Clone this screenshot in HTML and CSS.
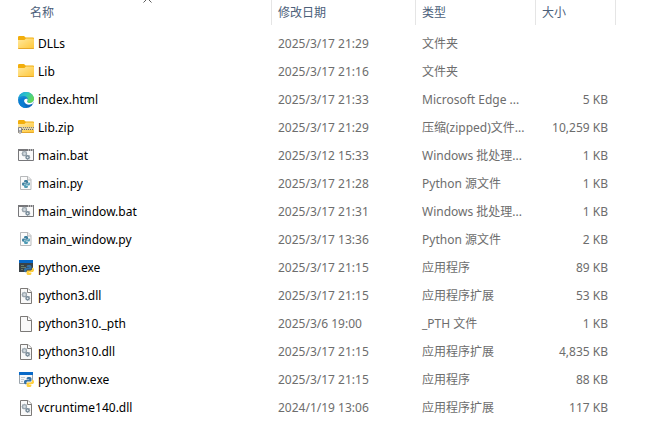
FILE: index.html
```html
<!DOCTYPE html>
<html lang="zh-CN">
<head>
<meta charset="utf-8">
<meta name="viewport" content="width=device-width, initial-scale=1">
<title>文件列表</title>
<link rel="stylesheet" href="styles.css">
</head>
<body>
<svg class="sprite" aria-hidden="true">
  <defs>
    <linearGradient id="fold" x1="0" y1="0" x2="1" y2="1"><stop offset="0" stop-color="#ffe9a0"/><stop offset="1" stop-color="#ffc636"/></linearGradient>
    <linearGradient id="edge-top" x1="0" y1="0" x2="1" y2="0.4"><stop offset="0" stop-color="#1b9fdc"/><stop offset="0.5" stop-color="#2cc3c9"/><stop offset="1" stop-color="#62d957"/></linearGradient>
    <linearGradient id="edge-left" x1="0" y1="0" x2="0.4" y2="1"><stop offset="0" stop-color="#1c9de0"/><stop offset="1" stop-color="#0b65bd"/></linearGradient>
    <symbol id="folder" viewBox="0 0 16 16">
      <path d="M0 1.2Q0 0 1.2 0H6L7.6 1.5H15Q16 1.5 16 2.5V5H0z" fill="#f2ae0c"/>
      <path d="M0 4H6.4L8 2.4H15Q16 2.4 16 3.4V12Q16 13 15 13H1Q0 13 0 12z" fill="url(#fold)"/>
      <path d="M0 12H16Q16 13 15 13H1Q0 13 0 12z" fill="#e6a72a"/>
    </symbol>
    <symbol id="zip" viewBox="0 0 16 16">
      <use href="#folder"/>
      <path d="M0 7H16V10H0z" fill="#d9cda6"/>
      <path d="M5 7.5H16" stroke="#8b8471" stroke-dasharray="1 1"/>
      <path d="M4 9.5H16" stroke="#6d6960" stroke-dasharray="1 1"/>
      <path d="M.5 7.5H3.5V12.5Q2 14 .5 12.5z" fill="#eeeeee" stroke="#88888a"/>
      <path d="M1.5 10H2.5V12H1.5z" fill="#66666a"/>
    </symbol>
    <symbol id="edge" viewBox="0 0 16 16">
      <circle cx="8" cy="8" r="8" fill="url(#edge-left)"/>
      <path d="M.2 6.6C1 2.6 4.2 0 8 0c4.6 0 8 3.3 8 6.9 0 2.5-1.8 4.1-4.1 4.1-1.8 0-2.9-.7-2.9-1.5 0-.5.7-.9.7-2.1C9.7 5.6 8.1 4.1 5.6 4.1 3.1 4.1 1.2 5.1.2 6.6z" fill="url(#edge-top)"/>
      <path d="M5.6 7.8C4.6 10.5 6.3 14.1 9.5 15.8 6.2 16.5 2.3 14.7 1 11.5-.1 8.6 2.6 5.8 6 5.9c1.1 0 1.8.3 2.3.7C7 6.5 6 7 5.6 7.8z" fill="#097dd2"/>
      <path d="M8.8 6.8C6.5 6.7 5.7 8.4 6.3 9.8c.9 2.2 3.5 3.2 5.8 2.8 1.3-.2 2.2-.7 2.8-1.1l1.1-2.2V8c-.9 2-2.4 3-4.1 3-1.8 0-2.9-.7-2.9-1.5 0-.5.7-.9.7-2.1z" fill="#fff"/>
    </symbol>
    <symbol id="gears" viewBox="0 0 16 16">
      <circle cx="6.5" cy="5.7" r="2" fill="#d3dbe0" stroke="#9aa5ad" stroke-width="1.3"/>
      <path d="M6.5 2.8V3.6M3.6 5.7H4.4M4.4 3.7L5 4.2M8.6 3.7L8 4.2M4.4 7.8L5 7.2" stroke="#a5afb6"/>
      <circle cx="9.6" cy="9.3" r="1.6" fill="#e3e9ed" stroke="#748795" stroke-width="1.4"/>
      <path d="M9.6 11.2V12M11.5 9.3H12.2M11 10.8L11.5 11.3M11 7.8L11.5 7.3" stroke="#8796a1"/>
    </symbol>
    <symbol id="bat" viewBox="0 0 16 16">
      <path d="M.5 1.5H15.5V12.5H.5z" fill="#fafafa" stroke="#77777a"/>
      <path d="M0 1H16V3H0z" fill="#77777a"/>
      <path d="M10 2H11M12 2H13M14 2H15" stroke="#fff"/>
      <use href="#gears"/>
    </symbol>
    <symbol id="page" viewBox="0 0 16 16">
      <path d="M2.5 .5H10L13.5 4V15.5H2.5z" fill="#f9f9f9" stroke="#7c7a78"/>
      <path d="M9.5 .5V4.5H13.5" fill="#fff" stroke="#7c7a78"/>
    </symbol>
    <symbol id="dll" viewBox="0 0 16 16">
      <use href="#page"/>
      <use href="#gears" y="1"/>
    </symbol>
    <symbol id="snake" viewBox="0 0 10 10">
      <path d="M5 0C3.2 0 2.6.7 2.6 1.6V2.6H5.2V3.1H1.5C.5 3.1 0 3.9 0 5s.5 2.2 1.4 2.2H2.4V6C2.4 5.1 3 4.6 3.8 4.6H6.3C7 4.6 7.5 4.1 7.5 3.4V1.6C7.5.6 6.7 0 5 0z" fill="var(--snake-a)"/>
      <path d="M5 10C6.8 10 7.4 9.3 7.4 8.4V7.4H4.8V6.9H8.5C9.5 6.9 10 6.1 10 5S9.5 2.8 8.6 2.8H8V4C8 4.9 7.2 5.4 6.4 5.4H3.9C3.1 5.4 2.6 5.9 2.6 6.6V8.4C2.6 9.4 3.3 10 5 10z" fill="var(--snake-b)"/>
    </symbol>
    <symbol id="py" viewBox="0 0 16 16">
      <path d="M2.5 .5H10L13 3.5V13.5H2.5z" fill="#fbfbfb" stroke="#b7b9bb"/>
      <path d="M9.5 .5V4H13" fill="#eee" stroke="#b7b9bb"/>
      <use href="#snake" class="snake-file" x="4" y="4" width="8" height="8"/>
    </symbol>
    <symbol id="exe" viewBox="0 0 16 16">
      <path d="M1 0H15V12H1z" fill="#3b4246"/>
      <path d="M1 0H15V3H1z" fill="#0869c8"/>
      <path d="M3 5.5H6M3 7.5H8M3 9.5H5" stroke="#66806b"/>
      <use href="#snake" class="snake-app" x="6" y="5" width="10" height="10"/>
    </symbol>
    <symbol id="exew" viewBox="0 0 16 16">
      <path d="M1.5 .5H14.5V11.5H1.5z" fill="#f5f7f9" stroke="#9ba5ad"/>
      <path d="M1 0H15V3H1z" fill="#0869c8"/>
      <path d="M3 5.5H7M3 7.5H6M3 9.5H5" stroke="#c3cbd1"/>
      <use href="#snake" class="snake-app" x="6" y="5" width="10" height="10"/>
    </symbol>
  </defs>
</svg>
<main>
<table class="files">
  <colgroup><col class="col-name"><col class="col-date"><col class="col-type"><col class="col-size"><col></colgroup>
  <thead>
    <tr>
      <th scope="col" class="name-head" aria-sort="ascending"><button type="button">名称</button><svg class="sort" viewBox="0 0 9 5" aria-hidden="true"><path d="M.5 4.5L4.5 .5L8.5 4.5"/></svg></th>
      <th scope="col"><button type="button">修改日期</button></th>
      <th scope="col"><button type="button">类型</button></th>
      <th scope="col"><button type="button">大小</button></th>
      <td></td>
    </tr>
  </thead>
  <tbody>
    <tr><td><span class="file"><svg class="icon"><use href="#folder"/></svg>DLLs</span></td><td>2025/3/17 21:29</td><td>文件夹</td><td class="size"></td><td></td></tr>
    <tr><td><span class="file"><svg class="icon"><use href="#folder"/></svg>Lib</span></td><td>2025/3/17 21:16</td><td>文件夹</td><td class="size"></td><td></td></tr>
    <tr><td><span class="file"><svg class="icon"><use href="#edge"/></svg>index.html</span></td><td>2025/3/17 21:33</td><td>Microsoft Edge ...</td><td class="size">5 KB</td><td></td></tr>
    <tr><td><span class="file"><svg class="icon"><use href="#zip"/></svg>Lib.zip</span></td><td>2025/3/17 21:29</td><td>压缩(zipped)文件...</td><td class="size">10,259 KB</td><td></td></tr>
    <tr><td><span class="file"><svg class="icon"><use href="#bat"/></svg>main.bat</span></td><td>2025/3/12 15:33</td><td>Windows 批处理...</td><td class="size">1 KB</td><td></td></tr>
    <tr><td><span class="file"><svg class="icon"><use href="#py"/></svg>main.py</span></td><td>2025/3/17 21:28</td><td>Python 源文件</td><td class="size">1 KB</td><td></td></tr>
    <tr><td><span class="file"><svg class="icon"><use href="#bat"/></svg>main_window.bat</span></td><td>2025/3/17 21:31</td><td>Windows 批处理...</td><td class="size">1 KB</td><td></td></tr>
    <tr><td><span class="file"><svg class="icon"><use href="#py"/></svg>main_window.py</span></td><td>2025/3/17 13:36</td><td>Python 源文件</td><td class="size">2 KB</td><td></td></tr>
    <tr><td><span class="file"><svg class="icon"><use href="#exe"/></svg>python.exe</span></td><td>2025/3/17 21:15</td><td>应用程序</td><td class="size">89 KB</td><td></td></tr>
    <tr><td><span class="file"><svg class="icon"><use href="#dll"/></svg>python3.dll</span></td><td>2025/3/17 21:15</td><td>应用程序扩展</td><td class="size">53 KB</td><td></td></tr>
    <tr><td><span class="file"><svg class="icon"><use href="#page"/></svg>python310._pth</span></td><td>2025/3/6 19:00</td><td>_PTH 文件</td><td class="size">1 KB</td><td></td></tr>
    <tr><td><span class="file"><svg class="icon"><use href="#dll"/></svg>python310.dll</span></td><td>2025/3/17 21:15</td><td>应用程序扩展</td><td class="size">4,835 KB</td><td></td></tr>
    <tr><td><span class="file"><svg class="icon"><use href="#exew"/></svg>pythonw.exe</span></td><td>2025/3/17 21:15</td><td>应用程序</td><td class="size">88 KB</td><td></td></tr>
    <tr><td><span class="file"><svg class="icon"><use href="#dll"/></svg>vcruntime140.dll</span></td><td>2024/1/19 13:06</td><td>应用程序扩展</td><td class="size">117 KB</td><td></td></tr>
  </tbody>
</table>
</main>
</body>
</html>
```

FILE: styles.css
```css
body {
  margin: 0;
  background: #fff;
  color: #6d6d6d;
  font: 12px/16px "Noto Sans", "Noto Sans CJK SC", sans-serif;
}

.sprite {
  position: absolute;
  width: 0;
  height: 0;
}

.files {
  width: 100%;
  table-layout: fixed;
  border-collapse: separate;
  border-spacing: 0;
}

.col-name { width: 272px; }
.col-date { width: 144px; }
.col-type { width: 120px; }
.col-size { width: 80px; }

th,
td {
  box-sizing: border-box;
  padding: 0 0 0 6px;
  text-align: left;
  font-weight: 400;
  white-space: nowrap;
}

th {
  height: 25px;
  border-right: 1px solid #e5e5e5;
}

.name-head {
  position: relative;
  padding-left: 30px;
}

th button {
  display: block;
  width: 100%;
  padding: 0;
  border: 0;
  background: none;
  color: #4c607a;
  font: inherit;
  text-align: left;
}

.sort {
  position: absolute;
  top: -2px;
  left: 143px;
  width: 9px;
  height: 5px;
  fill: none;
  stroke: #5d5d5d;
}

/* Space between the header and the first row */
tbody::before {
  content: "";
  display: table-row;
  height: 5px;
}

tbody td {
  height: 28px;
}

tbody td:first-child {
  padding-left: 18px;
}

.file {
  display: flex;
  align-items: center;
  gap: 4px;
  color: #000;
}

.icon {
  flex: none;
  width: 16px;
  height: 16px;
}

.files .size {
  padding: 0 8px 0 0;
  text-align: right;
}

.snake-file {
  --snake-a: #3d7f9e;
  --snake-b: #4f9cb5;
}

.snake-app {
  --snake-a: #3571a6;
  --snake-b: #ffd03f;
}
```
